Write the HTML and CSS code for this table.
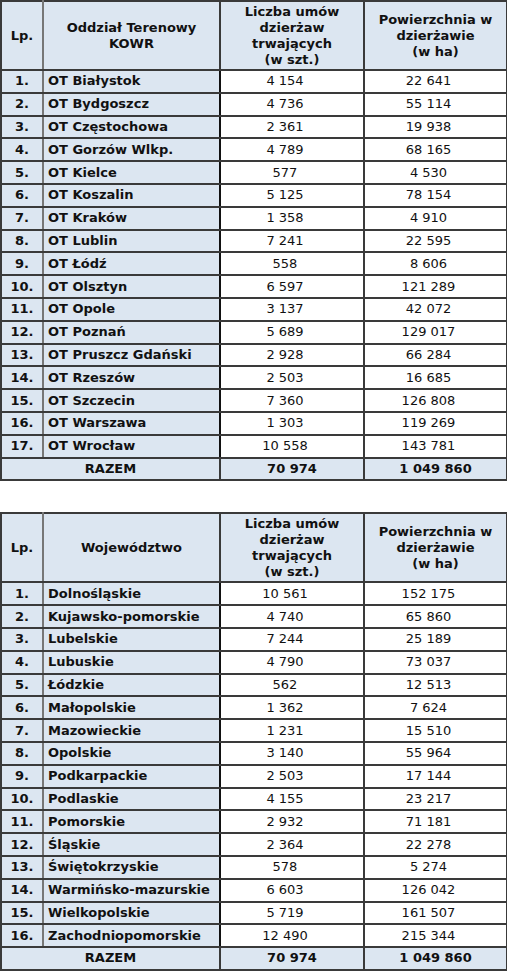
FILE: index.html
```html
<!DOCTYPE html>
<html lang="pl">
<head>
<meta charset="utf-8">
<title>Dzierżawy KOWR</title>
<link rel="stylesheet" href="styles.css">
</head>
<body>
<table class="tbl">
  <colgroup><col class="c1"><col class="c2"><col class="c3"><col class="c4"></colgroup>
  <thead>
    <tr class="head">
      <th class="lp">Lp.</th>
      <th>Oddział Terenowy<br>KOWR</th>
      <th class="num">Liczba umów<br>dzierżaw<br>trwających<br>(w szt.)</th>
      <th>Powierzchnia w<br>dzierżawie<br>(w ha)</th>
    </tr>
  </thead>
  <tbody>
    <tr><td class="lp">1.</td><td class="name">OT Białystok</td><td class="num">4 154</td><td class="area">22 641</td></tr>
    <tr><td class="lp">2.</td><td class="name">OT Bydgoszcz</td><td class="num">4 736</td><td class="area">55 114</td></tr>
    <tr><td class="lp">3.</td><td class="name">OT Częstochowa</td><td class="num">2 361</td><td class="area">19 938</td></tr>
    <tr><td class="lp">4.</td><td class="name">OT Gorzów Wlkp.</td><td class="num">4 789</td><td class="area">68 165</td></tr>
    <tr><td class="lp">5.</td><td class="name">OT Kielce</td><td class="num">577</td><td class="area">4 530</td></tr>
    <tr><td class="lp">6.</td><td class="name">OT Koszalin</td><td class="num">5 125</td><td class="area">78 154</td></tr>
    <tr><td class="lp">7.</td><td class="name">OT Kraków</td><td class="num">1 358</td><td class="area">4 910</td></tr>
    <tr><td class="lp">8.</td><td class="name">OT Lublin</td><td class="num">7 241</td><td class="area">22 595</td></tr>
    <tr><td class="lp">9.</td><td class="name">OT Łódź</td><td class="num">558</td><td class="area">8 606</td></tr>
    <tr><td class="lp">10.</td><td class="name">OT Olsztyn</td><td class="num">6 597</td><td class="area">121 289</td></tr>
    <tr><td class="lp">11.</td><td class="name">OT Opole</td><td class="num">3 137</td><td class="area">42 072</td></tr>
    <tr><td class="lp">12.</td><td class="name">OT Poznań</td><td class="num">5 689</td><td class="area">129 017</td></tr>
    <tr><td class="lp">13.</td><td class="name">OT Pruszcz Gdański</td><td class="num">2 928</td><td class="area">66 284</td></tr>
    <tr><td class="lp">14.</td><td class="name">OT Rzeszów</td><td class="num">2 503</td><td class="area">16 685</td></tr>
    <tr><td class="lp">15.</td><td class="name">OT Szczecin</td><td class="num">7 360</td><td class="area">126 808</td></tr>
    <tr><td class="lp">16.</td><td class="name">OT Warszawa</td><td class="num">1 303</td><td class="area">119 269</td></tr>
    <tr><td class="lp">17.</td><td class="name">OT Wrocław</td><td class="num">10 558</td><td class="area">143 781</td></tr>
    <tr class="total"><td colspan="2">RAZEM</td><td>70 974</td><td>1 049 860</td></tr>
  </tbody>
</table>

<table class="tbl second">
  <colgroup><col class="c1"><col class="c2"><col class="c3"><col class="c4"></colgroup>
  <thead>
    <tr class="head">
      <th class="lp">Lp.</th>
      <th>Województwo</th>
      <th class="num">Liczba umów<br>dzierżaw<br>trwających<br>(w szt.)</th>
      <th>Powierzchnia w<br>dzierżawie<br>(w ha)</th>
    </tr>
  </thead>
  <tbody>
    <tr><td class="lp">1.</td><td class="name">Dolnośląskie</td><td class="num">10 561</td><td class="area">152 175</td></tr>
    <tr><td class="lp">2.</td><td class="name">Kujawsko-pomorskie</td><td class="num">4 740</td><td class="area">65 860</td></tr>
    <tr><td class="lp">3.</td><td class="name">Lubelskie</td><td class="num">7 244</td><td class="area">25 189</td></tr>
    <tr><td class="lp">4.</td><td class="name">Lubuskie</td><td class="num">4 790</td><td class="area">73 037</td></tr>
    <tr><td class="lp">5.</td><td class="name">Łódzkie</td><td class="num">562</td><td class="area">12 513</td></tr>
    <tr><td class="lp">6.</td><td class="name">Małopolskie</td><td class="num">1 362</td><td class="area">7 624</td></tr>
    <tr><td class="lp">7.</td><td class="name">Mazowieckie</td><td class="num">1 231</td><td class="area">15 510</td></tr>
    <tr><td class="lp">8.</td><td class="name">Opolskie</td><td class="num">3 140</td><td class="area">55 964</td></tr>
    <tr><td class="lp">9.</td><td class="name">Podkarpackie</td><td class="num">2 503</td><td class="area">17 144</td></tr>
    <tr><td class="lp">10.</td><td class="name">Podlaskie</td><td class="num">4 155</td><td class="area">23 217</td></tr>
    <tr><td class="lp">11.</td><td class="name">Pomorskie</td><td class="num">2 932</td><td class="area">71 181</td></tr>
    <tr><td class="lp">12.</td><td class="name">Śląskie</td><td class="num">2 364</td><td class="area">22 278</td></tr>
    <tr><td class="lp">13.</td><td class="name">Świętokrzyskie</td><td class="num">578</td><td class="area">5 274</td></tr>
    <tr><td class="lp">14.</td><td class="name">Warmińsko-mazurskie</td><td class="num">6 603</td><td class="area">126 042</td></tr>
    <tr><td class="lp">15.</td><td class="name">Wielkopolskie</td><td class="num">5 719</td><td class="area">161 507</td></tr>
    <tr><td class="lp">16.</td><td class="name">Zachodniopomorskie</td><td class="num">12 490</td><td class="area">215 344</td></tr>
    <tr class="total"><td colspan="2">RAZEM</td><td>70 974</td><td>1 049 860</td></tr>
  </tbody>
</table>
</body>
</html>
```

FILE: styles.css
```css
html, body {
  margin: 0;
  padding: 0;
  background: #ffffff;
}

body {
  font-family: "DejaVu Sans", Verdana, sans-serif;
  font-size: 13px;
  color: #111111;
}

.tbl {
  width: 506px;
  border-collapse: collapse;
  table-layout: fixed;
  border: 2px solid #333;
}

.tbl.second {
  margin-top: 31px;
}

.c1 { width: 42px; }
.c2 { width: 177px; }
.c3 { width: 144px; }
.c4 { width: 143px; }

.tbl th,
.tbl td {
  border: 2px solid #3a3a3a;
  padding: 0 4px;
  line-height: 16px;
  white-space: nowrap;
}

.tbl th {
  background: #dce6f1;
  font-weight: bold;
  text-align: center;
  vertical-align: middle;
}

.head {
  height: 69px;
}

.tbl tbody tr {
  height: 22.8px;
}

.tbl td.lp {
  background: #dce6f1;
  font-weight: bold;
  text-align: center;
  border-right-color: #777;
}

.tbl th.lp {
  border-right-color: #777;
}

.tbl td.name {
  background: #dce6f1;
  font-weight: bold;
  text-align: left;
  border-right-color: #111;
}

.tbl td.num,
.tbl td.area {
  background: #ffffff;
  text-align: center;
  padding-right: 18px;
}

.tbl .total td {
  background: #dce6f1;
  font-weight: bold;
  text-align: center;
}
```
